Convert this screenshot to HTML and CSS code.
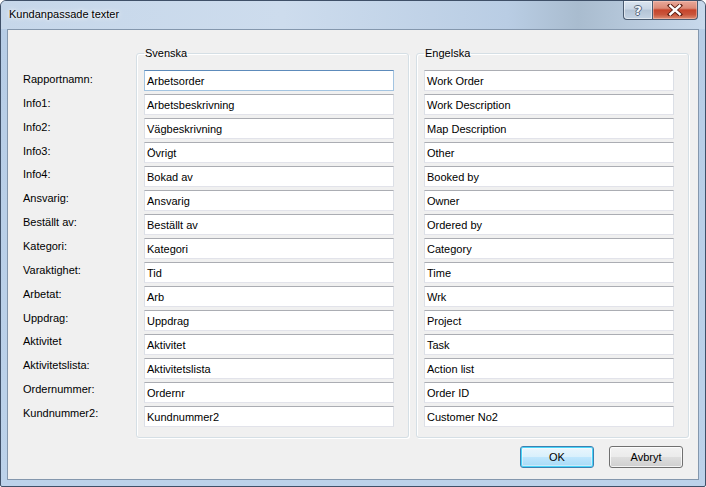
FILE: index.html
```html
<!DOCTYPE html>
<html lang="sv">
<head>
<meta charset="utf-8">
<title>Kundanpassade texter</title>
<link rel="stylesheet" href="styles.css">
</head>
<body>
<div class="window">
  <div class="titlebar">
    <span class="title">Kundanpassade texter</span>
    <div class="caption-buttons">
      <div class="cbtn help"><span>?</span></div>
      <div class="cbtn close">
        <svg width="16" height="12" viewBox="0 0 16 12">
          <path d="M3 1.5 L13 10.5 M13 1.5 L3 10.5" stroke="#5a1d12" stroke-width="4.2" stroke-linecap="square"/>
          <path d="M3.3 1.8 L12.7 10.2 M12.7 1.8 L3.3 10.2" stroke="#ffffff" stroke-width="2.4" stroke-linecap="square"/>
        </svg>
      </div>
    </div>
  </div>
  <div class="client">
    <div class="main">
      <div class="labels">
        <div class="lbl">Rapportnamn:</div>
        <div class="lbl">Info1:</div>
        <div class="lbl">Info2:</div>
        <div class="lbl">Info3:</div>
        <div class="lbl">Info4:</div>
        <div class="lbl">Ansvarig:</div>
        <div class="lbl">Beställt av:</div>
        <div class="lbl">Kategori:</div>
        <div class="lbl">Varaktighet:</div>
        <div class="lbl">Arbetat:</div>
        <div class="lbl">Uppdrag:</div>
        <div class="lbl">Aktivitet</div>
        <div class="lbl">Aktivitetslista:</div>
        <div class="lbl">Ordernummer:</div>
        <div class="lbl">Kundnummer2:</div>
      </div>
      <fieldset class="group">
        <legend>Svenska</legend>
        <div class="field focused">Arbetsorder</div>
        <div class="field">Arbetsbeskrivning</div>
        <div class="field">Vägbeskrivning</div>
        <div class="field">Övrigt</div>
        <div class="field">Bokad av</div>
        <div class="field">Ansvarig</div>
        <div class="field">Beställt av</div>
        <div class="field">Kategori</div>
        <div class="field">Tid</div>
        <div class="field">Arb</div>
        <div class="field">Uppdrag</div>
        <div class="field">Aktivitet</div>
        <div class="field">Aktivitetslista</div>
        <div class="field">Ordernr</div>
        <div class="field">Kundnummer2</div>
      </fieldset>
      <fieldset class="group">
        <legend>Engelska</legend>
        <div class="field">Work Order</div>
        <div class="field">Work Description</div>
        <div class="field">Map Description</div>
        <div class="field">Other</div>
        <div class="field">Booked by</div>
        <div class="field">Owner</div>
        <div class="field">Ordered by</div>
        <div class="field">Category</div>
        <div class="field">Time</div>
        <div class="field">Wrk</div>
        <div class="field">Project</div>
        <div class="field">Task</div>
        <div class="field">Action list</div>
        <div class="field">Order ID</div>
        <div class="field">Customer No2</div>
      </fieldset>
    </div>
    <div class="buttons">
      <div class="btn default">OK</div>
      <div class="btn">Avbryt</div>
    </div>
  </div>
</div>
</body>
</html>
```

FILE: styles.css
```css
html, body {
  margin: 0;
  padding: 0;
  background: #ffffff;
}

body {
  font-family: "Liberation Sans", Arial, sans-serif;
  font-size: 11px;
  color: #000000;
}

.window {
  width: 706px;
  height: 487px;
  box-sizing: border-box;
  border: 1px solid #3f5068;
  border-radius: 6px 6px 2px 2px;
  background: linear-gradient(180deg, #c3d6ea 0px, #b7cde6 30px, #bcd2ea 100%);
  display: flex;
  flex-direction: column;
  overflow: hidden;
}

.titlebar {
  height: 28px;
  display: flex;
  align-items: flex-start;
  justify-content: space-between;
  background: linear-gradient(90deg, #c6d7ea 0%, #cddced 40%, #b9cde4 72%, #a9bccf 82%, #c8d9ec 100%);
}

.title {
  font-size: 11px;
  padding: 7px 0 0 8px;
  color: #000000;
  text-shadow: 0 0 6px #ffffff, 0 0 3px #ffffff;
}

.caption-buttons {
  display: flex;
  margin-right: 7px;
}

.cbtn {
  height: 19px;
  box-sizing: border-box;
  border: 1px solid #4b5b70;
  border-top: none;
  display: flex;
  align-items: center;
  justify-content: center;
}

.help {
  width: 29px;
  border-right: none;
  border-radius: 0 0 0 4px;
  background: linear-gradient(180deg, #dbe5f0 0%, #c9d6e5 45%, #b4c4d6 50%, #c4d3e3 100%);
  box-shadow: inset 0 0 0 1px rgba(255, 255, 255, 0.5);
}

.help span {
  font-family: "DejaVu Sans", sans-serif;
  font-weight: bold;
  font-size: 13px;
  line-height: 13px;
  color: #f4f6f9;
  text-shadow: -1px 0 0 #55657a, 1px 0 0 #55657a, 0 -1px 0 #55657a, 0 1px 0 #55657a;
}

.close {
  width: 46px;
  border-radius: 0 0 4px 0;
  background: linear-gradient(180deg, #e9a99a 0%, #dc8a77 40%, #c6442b 50%, #c9553b 75%, #dd8d72 100%);
  box-shadow: inset 0 0 0 1px rgba(255, 210, 200, 0.45);
}

.client {
  flex: 1;
  margin: 0 6px 6px 6px;
  border: 1px solid #8497ad;
  background: #f0f0f0;
  display: flex;
  flex-direction: column;
}

.main {
  display: flex;
  align-items: flex-start;
}

.labels {
  width: 128px;
  box-sizing: border-box;
  padding: 38px 0 0 15px;
  display: flex;
  flex-direction: column;
}

.lbl {
  height: 23.86px;
  line-height: 23px;
  white-space: nowrap;
}

.group {
  width: 273px;
  box-sizing: border-box;
  margin: 17px 0 0 0;
  padding: 10px 14px 10px 7px;
  border: 1px solid #d5dfe5;
  border-radius: 3px;
  box-shadow: inset 1px 1px 0 #ffffff, 1px 1px 0 #ffffff;
  display: flex;
  flex-direction: column;
  gap: 3px;
  min-width: 0;
}

.group + .group {
  margin-left: 7px;
}

.group legend {
  padding: 0 1px;
  line-height: 13px;
  height: 13px;
  color: #000000;
}

.field {
  height: 21px;
  box-sizing: border-box;
  border: 1px solid #e2e3ea;
  border-top-color: #abadb3;
  border-left-color: #dbdfe6;
  border-right-color: #dbdfe6;
  background: #ffffff;
  padding: 0 2px;
  line-height: 20px;
  white-space: nowrap;
  overflow: hidden;
}

.field.focused {
  border-color: #a3c4e1;
  border-top-color: #5d8bbb;
}

.buttons {
  display: flex;
  justify-content: flex-end;
  gap: 15px;
  margin-top: 8px;
  padding-right: 15px;
}

.btn {
  width: 74px;
  height: 22px;
  box-sizing: border-box;
  border: 1px solid #707070;
  border-radius: 3px;
  background: linear-gradient(180deg, #f2f2f2 0%, #ebebeb 48%, #dddddd 52%, #cfcfcf 100%);
  box-shadow: inset 0 0 0 1px rgba(255, 255, 255, 0.75);
  text-align: center;
  line-height: 20px;
}

.btn.default {
  border-color: #3c7fb1;
  background: linear-gradient(180deg, #eaf6fd 0%, #d9f0fc 48%, #bee6fd 52%, #a7d9f5 100%);
  box-shadow: inset 0 0 0 1px #48d4f8, inset 0 0 0 2px rgba(255, 255, 255, 0.4);
}
```
